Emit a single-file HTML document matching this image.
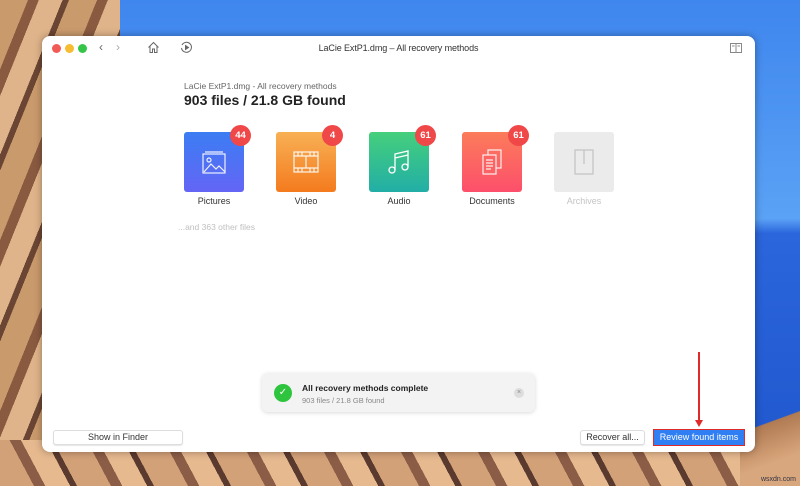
<!DOCTYPE html>
<html><head><meta charset="utf-8"><style>
*{margin:0;padding:0;box-sizing:border-box}
body{width:800px;height:486px;overflow:hidden;position:relative;font-family:"Liberation Sans",sans-serif;background:linear-gradient(180deg,#3f86ee 0%,#5aa2f5 45%,#2b66dc 48%,#1f55cc 100%)}
.bgl{position:absolute;left:0;top:0;width:120px;height:486px;background:repeating-linear-gradient(112deg,#c99a6c 0 26px,#8a5a40 26px 36px,#e0b48a 36px 58px,#6b4534 58px 64px)}
.bgb{position:absolute;left:0;top:440px;width:760px;height:46px;background:repeating-linear-gradient(62deg,#d3a178 0 30px,#8b5d46 30px 40px,#e6b98f 40px 62px,#5a3a2e 62px 68px)}
.bgr{position:absolute;left:740px;top:400px;width:60px;height:86px;background:linear-gradient(160deg,transparent 30%,#b07a52 31%,#d9a77d 70%)}
.win{position:absolute;left:42px;top:36px;width:713px;height:416px;background:#fff;border-radius:8px;box-shadow:0 0 8px rgba(0,0,0,.35)}
.dot{position:absolute;top:8px;width:9px;height:9px;border-radius:50%}
.title{position:absolute;top:7px;left:0;width:713px;text-align:center;font-size:9px;color:#333;letter-spacing:-.1px}
.t{position:absolute;font-size:8.5px;color:#666}
.tile{position:absolute;top:96px;width:60px;height:60px;border-radius:3px}
.badge{position:absolute;right:-7px;top:-7px;width:21px;height:21px;border-radius:50%;background:#f04848;color:#fff;font-size:9.5px;font-weight:bold;text-align:center;line-height:21px}
.lbl{position:absolute;top:160px;width:80px;text-align:center;font-size:9px;color:#333}
.btn{position:absolute;top:394px;height:15px;border:1px solid #ddd;border-radius:3px;font-size:9px;color:#333;text-align:center;line-height:13px;background:#fff;box-shadow:0 1px 1px rgba(0,0,0,.1)}
</style></head><body>
<div class="bgl"></div><div class="bgb"></div><div class="bgr"></div>
<div class="win">
<div class="dot" style="left:10px;background:#f25a55"></div>
<div class="dot" style="left:23px;background:#f6bd33"></div>
<div class="dot" style="left:36px;background:#35c548"></div>
<div style="position:absolute;left:57px;top:4px;font-size:12px;color:#666">‹</div>
<div style="position:absolute;left:74px;top:4px;font-size:12px;color:#aaa">›</div>
<svg style="position:absolute;left:105px;top:5px" width="13" height="13" viewBox="0 0 13 13" fill="none" stroke="#666" stroke-width="1"><path d="M1.5 6.5L6.5 1.5L11.5 6.5M3 5v6.5h2.5v-3.5h2v3.5h2.5V5"/></svg>
<svg style="position:absolute;left:138px;top:5px" width="13" height="13" viewBox="0 0 13 13" fill="none" stroke="#666" stroke-width="1"><path d="M2 4A5 5 0 1 1 1.5 7"/><path d="M5.5 4.5l3 2-3 2z" fill="#666"/></svg>
<div class="title">LaCie ExtP1.dmg – All recovery methods</div>
<svg style="position:absolute;left:688px;top:7px" width="12" height="10" viewBox="0 0 12 10" fill="none" stroke="#888"><rect x=".5" y=".5" width="11" height="9"/><path d="M6 .5v9M2 3h2.5M7.5 3H10"/></svg>
<div class="t" style="left:142px;top:45px">LaCie ExtP1.dmg - All recovery methods</div>
<div style="position:absolute;left:142px;top:56px;font-size:14px;font-weight:bold;color:#222">903 files / 21.8 GB found</div>

<div class="tile" style="left:142px;background:linear-gradient(180deg,#3b7df3,#6465f5)"><div class="badge">44</div>
<svg style="position:absolute;left:17px;top:19px" width="26" height="24" viewBox="0 0 26 24" fill="none" stroke="#fff" stroke-width="1.2" opacity=".9"><rect x="2" y="3" width="22" height="19"/><path d="M4 1h18"/><circle cx="8" cy="9" r="2"/><path d="M3 21l7-8 5 5 3-3 6 6"/></svg></div>
<div class="tile" style="left:234px;background:linear-gradient(180deg,#f8b055,#f47b1e)"><div class="badge">4</div>
<svg style="position:absolute;left:16px;top:18px" width="28" height="24" viewBox="0 0 28 24" fill="none" stroke="#fff" stroke-width="1.2" opacity=".9"><rect x="2" y="2" width="24" height="20"/><path d="M2 6h24M2 18h24M14 6v12M6 2v4M10 2v4M18 2v4M22 2v4M6 18v4M10 18v4M18 18v4M22 18v4"/></svg></div>
<div class="tile" style="left:327px;background:linear-gradient(180deg,#45cf7c,#22aea6)"><div class="badge">61</div>
<svg style="position:absolute;left:18px;top:16px" width="24" height="28" viewBox="0 0 24 28" fill="none" stroke="#fff" stroke-width="1.3"><circle cx="5" cy="22" r="3"/><circle cx="18" cy="19" r="3"/><path d="M8 22V6l13-3v16M8 10l13-3"/></svg></div>
<div class="tile" style="left:420px;background:linear-gradient(180deg,#fb7c5a,#fd4f6b)"><div class="badge">61</div>
<svg style="position:absolute;left:18px;top:16px" width="24" height="28" viewBox="0 0 24 28" fill="none" stroke="#fff" stroke-width="1.2" opacity=".9"><rect x="8" y="2" width="13" height="18"/><rect x="3" y="7" width="13" height="19" fill="#fd6363"/><path d="M6 12h7M6 15h7M6 18h7M6 21h5"/></svg></div>
<div class="tile" style="left:512px;background:#ebebeb">
<svg style="position:absolute;left:18px;top:16px" width="24" height="28" viewBox="0 0 24 28" fill="none" stroke="#c4c4c4" stroke-width="1.3"><rect x="3" y="2" width="18" height="24"/><path d="M12 2v14"/></svg></div>
<div class="lbl" style="left:132px">Pictures</div>
<div class="lbl" style="left:224px">Video</div>
<div class="lbl" style="left:317px">Audio</div>
<div class="lbl" style="left:410px">Documents</div>
<div class="lbl" style="left:502px;color:#c4c4c4">Archives</div>
<div class="t" style="left:136px;top:186px;color:#c0c0c0">...and 363 other files</div>

<div style="position:absolute;left:220px;top:337px;width:273px;height:39px;background:#f3f3f3;border-radius:6px;box-shadow:0 1px 4px rgba(0,0,0,.15)">
<div style="position:absolute;left:12px;top:11px;width:18px;height:18px;border-radius:50%;background:#2ec43d;color:#fff;font-size:10px;text-align:center;line-height:18px">✓</div>
<div style="position:absolute;left:40px;top:10px;font-size:8.5px;font-weight:bold;color:#222">All recovery methods complete</div>
<div style="position:absolute;left:40px;top:23px;font-size:7.5px;color:#888">903 files / 21.8 GB found</div>
<div style="position:absolute;left:252px;top:15px;width:10px;height:10px;border-radius:50%;background:#ddd;font-size:7px;color:#888;text-align:center;line-height:10px">×</div>
</div>

<div class="btn" style="left:11px;width:130px">Show in Finder</div>
<div class="btn" style="left:538px;width:65px">Recover all...</div>
<div style="position:absolute;left:611px;top:393px;width:92px;height:17px;border:1.5px solid #e02a2a;background:#2f7ef3;color:#fff;font-size:9px;text-align:center;line-height:14px">Review found items</div>
<div style="position:absolute;left:656px;top:316px;width:1.5px;height:70px;background:#e02a2a"></div>
<div style="position:absolute;left:653px;top:384px;width:0;height:0;border-left:4px solid transparent;border-right:4px solid transparent;border-top:7px solid #e02a2a"></div>
</div>
<div style="position:absolute;right:4px;bottom:3px;font-size:7px;color:#334">wsxdn.com</div>
</body></html>
